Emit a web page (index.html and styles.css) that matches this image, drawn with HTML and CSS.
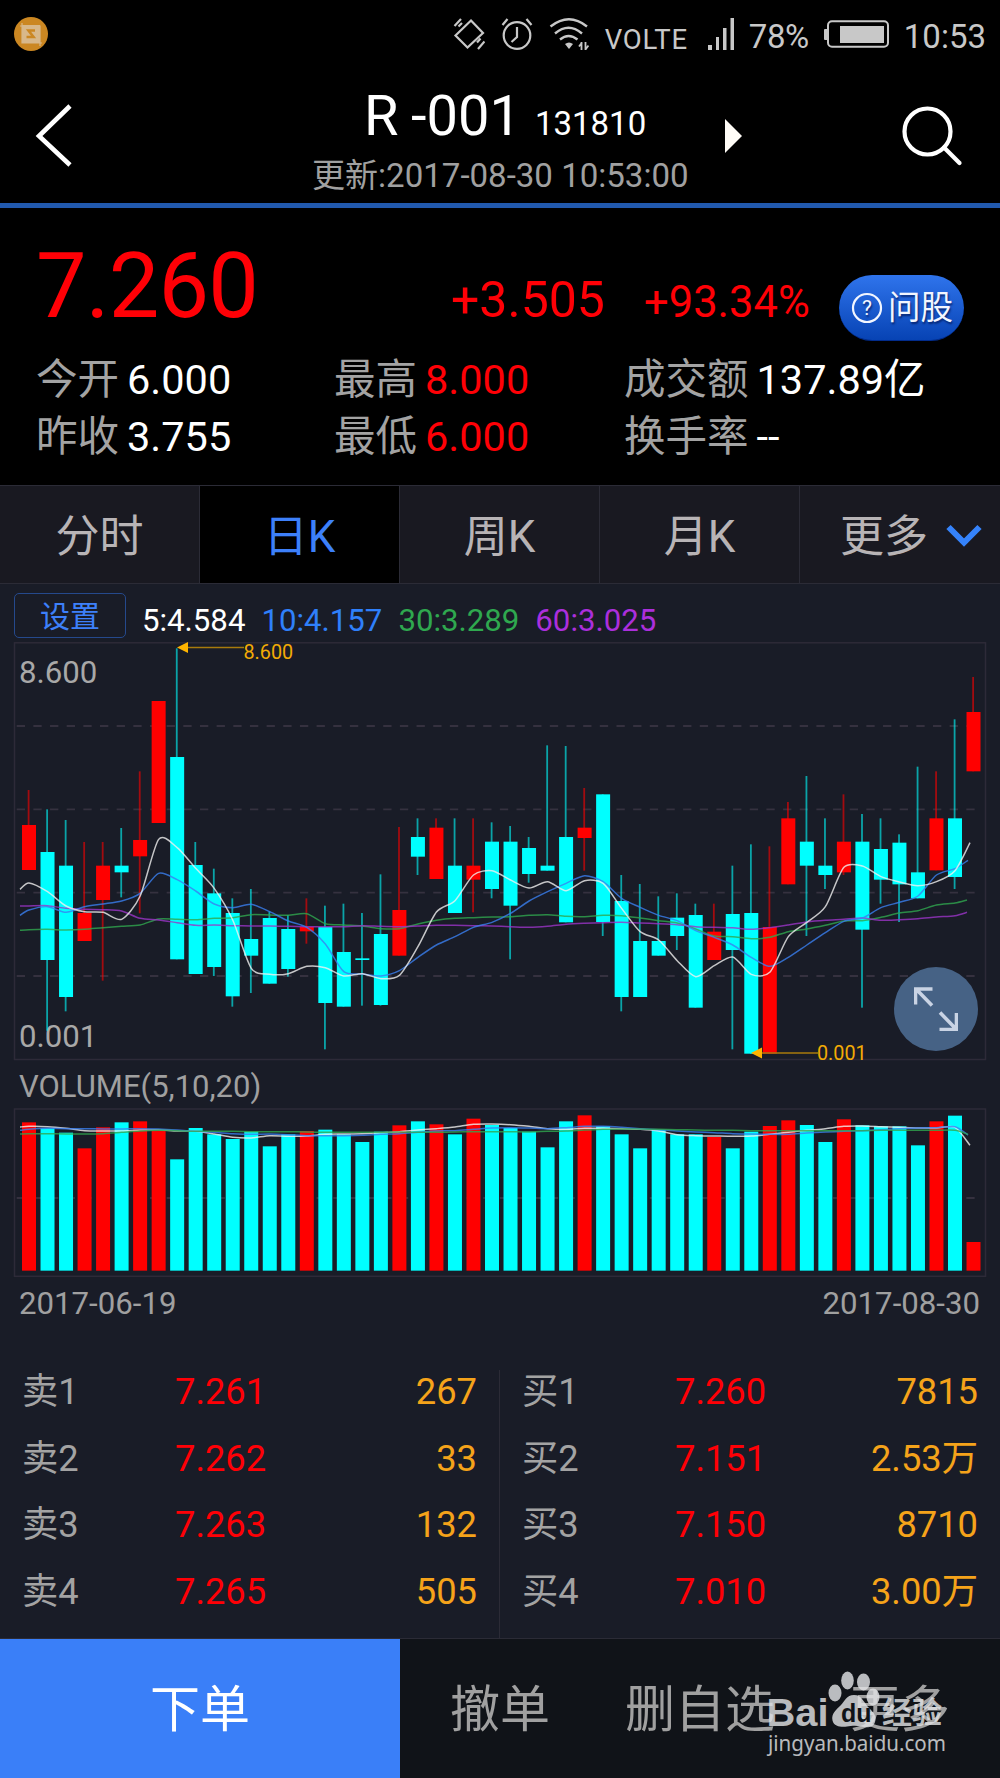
FILE: index.html
```html
<!DOCTYPE html>
<html lang="zh-CN">
<head>
    <meta charset="UTF-8">
    <meta name="viewport" content="width=device-width, initial-scale=1.0">
    <title>R-001 131810</title>
    <link rel="stylesheet" href="styles.css">
</head>
<body>
    <div class="status-bar">
        <svg class="app-icon" width="34" height="34" viewBox="0 0 34 34">
            <circle cx="17" cy="17" r="17" fill="#cb8722"/>
            <rect x="8" y="8" width="18" height="18" fill="#d8b88a"/>
            <path d="M8 6v20h20M6 9h20v20" fill="none" stroke="#d8b88a" stroke-width="1.2"/>
            <path d="M21 13.500h-6.500l5 6.500h-7" fill="none" stroke="#cb8722" stroke-width="2.6"/>
        </svg>
        <div class="status-icons">
            <svg width="32" height="32" viewBox="0 0 32 32" fill="none" stroke="#c8c8c8" stroke-width="2.2">
                <path d="M18 2.500L30 15 14.500 29.500 2.500 17.500z"/>
                <path d="M1.500 8L8 1M5.500 8.500l3.500-3.500M24 24.500l3.500-4M25 31l6.500-7.500"/>
            </svg>
            <svg width="32" height="32" viewBox="0 0 32 32" fill="none" stroke="#c8c8c8" stroke-width="2.2">
                <circle cx="16" cy="17.500" r="13.300"/>
                <path d="M16 9v10l-5.500 5M1.500 7l5-6M30.500 7l-5-6"/>
            </svg>
            <svg width="40" height="32" viewBox="0 0 40 32" fill="none" stroke="#c8c8c8" stroke-width="2.4">
                <path d="M1.500 8.500Q20-6 38 8.500M6 15.500Q19.500 4 33 15.500M11 21.500q8.500-7 17.500 0"/>
                <path d="M16 26q4-3 8 0l-4 5z" fill="#c8c8c8" stroke="none"/>
                <path d="M32.500 24v8M36.500 24v8M30 28.500l3-4M39.500 27.500l-3 4" stroke-width="1.8"/>
            </svg>
            <span class="volte">VOLTE</span>
            <svg width="27" height="32" viewBox="0 0 27 32" fill="#c8c8c8">
                <path d="M0 27h4v5H0zM8 19h3v13H8zM15 10h3.500v22H15zM22.500 0H26v32h-3.500z"/>
            </svg>
            <span class="percent">78%</span>
            <svg width="65" height="28" viewBox="0 0 65 28" fill="#c8c8c8">
                <rect x="4" y="1.200" width="60" height="25.600" rx="4" fill="none" stroke="#c8c8c8" stroke-width="2"/>
                <rect x="0" y="9" width="4" height="11" rx="1"/>
                <rect x="16" y="6" width="44" height="17"/>
            </svg>
            <span class="clock">10:53</span>
        </div>
    </div>

    <div class="header">
        <svg class="back" width="40" height="64" viewBox="0 0 40 64">
            <path d="M35 3L4 33l31 29" fill="none" stroke="#fff" stroke-width="4.600"/>
        </svg>
        <div class="title-block">
            <div class="title"><span class="name">R<i class="name-gap"></i>-001</span><span class="code">131810</span></div>
            <div class="updated">更新:2017-08-30 10:53:00</div>
        </div>
        <svg class="next" width="17" height="34" viewBox="0 0 17 34"><path d="M0 0l17 17L0 34z" fill="#fffcf7"/></svg>
        <svg class="search" width="62" height="62" viewBox="0 0 62 62" fill="none" stroke="#fff" stroke-width="4.200" stroke-linecap="round">
            <circle cx="26.500" cy="26.500" r="23"/>
            <path d="M43 42.500l15.500 15.500"/>
        </svg>
    </div>

    <div class="quote">
        <div class="price-row">
            <span class="price">7.260</span>
            <span class="change">+3.505</span>
            <span class="change-pct">+93.34%</span>
            <div class="ask-btn">
                <svg width="32" height="32" viewBox="0 0 32 32">
                    <circle cx="16" cy="16" r="14" fill="none" stroke="#f2f6ff" stroke-width="2.2"/>
                    <text x="16" y="23" class="ask-mark">?</text>
                </svg>
                <span>问股</span>
            </div>
        </div>
        <div class="stats">
            <div class="stat"><span class="label">今开</span><span>6.000</span></div>
            <div class="stat"><span class="label">最高</span><span class="up">8.000</span></div>
            <div class="stat"><span class="label">成交额</span><span>137.89亿</span></div>
            <div class="stat"><span class="label">昨收</span><span>3.755</span></div>
            <div class="stat"><span class="label">最低</span><span class="up">6.000</span></div>
            <div class="stat"><span class="label">换手率</span><span>--</span></div>
        </div>
    </div>

    <div class="tabs">
        <div class="tab">分时</div>
        <div class="tab active">日K</div>
        <div class="tab">周K</div>
        <div class="tab">月K</div>
        <div class="tab">更多
            <svg width="36" height="24" viewBox="0 0 36 24"><path d="M2.500 3L18 18.500 33.500 3" fill="none" stroke="#3583fb" stroke-width="6"/></svg>
        </div>
    </div>

    <div class="chart">
        <div class="legend">
            <span class="settings-btn">设置</span>
            <span class="ma5">5:4.584</span>
            <span class="ma10">10:4.157</span>
            <span class="ma30">30:3.289</span>
            <span class="ma60">60:3.025</span>
        </div>
        <div class="plot-wrap">
            <svg class="plot" id="kline" width="1000" height="424" viewBox="0 0 1000 424"></svg>
            <div class="fullscreen-btn">
                <svg width="44" height="44" viewBox="0 0 44 44" fill="none" stroke="#c9d3e4" stroke-width="3.600">
                    <path d="M18 18.500L2 2M1.500 17.500V2h17M26 25.500L42 42M42.500 26v16.500h-17"/>
                </svg>
            </div>
        </div>
        <div class="volume-title">VOLUME(5,10,20)</div>
        <svg class="plot" id="volume" width="1000" height="170" viewBox="0 0 1000 170"></svg>
        <div class="dates"><span>2017-06-19</span><span>2017-08-30</span></div>
    </div>

    <div class="book">
        <div class="side">
            <div class="order"><span>卖1</span><span class="up">7.261</span><span class="qty">267</span></div>
            <div class="order"><span>卖2</span><span class="up">7.262</span><span class="qty">33</span></div>
            <div class="order"><span>卖3</span><span class="up">7.263</span><span class="qty">132</span></div>
            <div class="order"><span>卖4</span><span class="up">7.265</span><span class="qty">505</span></div>
        </div>
        <div class="side">
            <div class="order"><span>买1</span><span class="up">7.260</span><span class="qty">7815</span></div>
            <div class="order"><span>买2</span><span class="up">7.151</span><span class="qty">2.53万</span></div>
            <div class="order"><span>买3</span><span class="up">7.150</span><span class="qty">8710</span></div>
            <div class="order"><span>买4</span><span class="up">7.010</span><span class="qty">3.00万</span></div>
        </div>
    </div>

    <div class="bottom-bar">
        <div class="action primary">下单</div>
        <div class="action">撤单</div>
        <div class="action">删自选</div>
        <div class="action">更多</div>
        <svg class="watermark" width="190" height="90" viewBox="0 0 190 90">
            <text x="6.500" y="57.500" class="wm-bai" textLength="62" lengthAdjust="spacingAndGlyphs">Bai</text>
            <ellipse cx="75" cy="25" rx="6.500" ry="8.500"/>
            <ellipse cx="87.500" cy="12.500" rx="6.300" ry="9"/>
            <ellipse cx="103.500" cy="14" rx="6.500" ry="8.500"/>
            <ellipse cx="113" cy="29" rx="6.500" ry="8.500"/>
            <path d="M94 27c8 0 10 8 15 13s8 8 6 14-8 6-14 4.500-10-.5-14 0-13 1-14.500-6 4-11 8-15 6-10.500 13.500-10.500z"/>
            <text x="81" y="54" class="wm-du">du</text>
            <text x="122" y="55" class="wm-cn">经验</text>
            <text x="8" y="83" class="wm-url" textLength="178" lengthAdjust="spacingAndGlyphs">jingyan.baidu.com</text>
        </svg>
    </div>
    <script src="chart.js"></script>
</body>
</html>
```
FILE: styles.css
```css
* {
    margin: 0;
    padding: 0;
    box-sizing: border-box;
}

body {
    width: 1000px;
    height: 1778px;
    overflow: hidden;
    background: #191c27;
    color: #fff;
    font-family: Roboto, "Noto Sans CJK SC", sans-serif;
}

svg {
    display: block;
    flex-shrink: 0;
}

.up {
    color: #ff0006;
}

/* status bar */
.status-bar {
    height: 74px;
    background: #000;
    display: flex;
    justify-content: space-between;
    padding: 0 14px 0 14px;
}

.app-icon {
    margin-top: 17px;
}

.status-icons {
    display: flex;
    align-items: center;
    color: #c8c8c8;
    font-size: 33px;
    line-height: 74px;
}

.status-icons svg {
    margin-bottom: 6px;
}

.status-icons svg + svg {
    margin-left: 16px;
}

.volte {
    font-size: 27.500px;
    margin: 6px 20px 0 16px;
    letter-spacing: 0.7px;
}

.percent {
    margin: 0 15px 0 14px;
    letter-spacing: -0.4px;
}

.clock {
    margin-left: 15px;
}

/* header */
.header {
    height: 134px;
    background: #000;
    border-bottom: 5px solid #2159ae;
    display: flex;
    padding-left: 35px;
}

.back {
    margin-top: 29px;
}

.title-block {
    width: 376px;
    margin-left: 237px;
    padding-top: 7px;
    white-space: nowrap;
}

.title {
    height: 70px;
    line-height: 70px;
    padding-left: 52px;
}

.name {
    font-size: 56px;
}

.name-gap {
    display: inline-block;
    width: 12.500px;
}

.code {
    font-size: 33px;
    margin-left: 14px;
}

.updated {
    color: #a0a0a0;
    font-size: 33.050px;
    line-height: 50px;
}

.next {
    margin: 45px 0 0 37px;
}

.search {
    margin: 31px 0 0 159px;
}

/* quote */
.quote {
    height: 277px;
    background: #000;
    padding: 29px 0 0 36px;
}

.price-row {
    height: 100px;
    display: grid;
    grid-template-columns: 415px 193px 195px 125px;
    align-items: baseline;
    line-height: 100px;
    color: #ff0006;
}

.price {
    font-size: 90px;
    letter-spacing: -0.8px;
}

.change {
    font-size: 50px;
}

.change-pct {
    font-size: 43.500px;
}

.ask-btn {
    align-self: start;
    margin-top: 38px;
    height: 66px;
    border-radius: 33px;
    background: linear-gradient(#2f74ec, #0743b4);
    border-bottom: 1px solid #022c8c;
    color: #f2f6ff;
    font-size: 32.500px;
    line-height: 66px;
    display: flex;
    align-items: center;
    gap: 5px;
    padding-left: 12px;
    text-shadow: 1px 2px 2px rgba(0, 20, 80, 0.7);
}

.ask-btn span {
    padding-top: 1px;
}

.ask-mark {
    font-size: 21px;
    fill: #f2f6ff;
    text-anchor: middle;
}

.stats {
    display: grid;
    grid-template-columns: 298px 290px 1fr;
    margin-top: 14px;
    font-size: 41.500px;
    line-height: 57px;
}

.stat {
    display: flex;
    gap: 8px;
}

.label {
    color: #a3a3a3;
}

/* period tabs */
.tabs {
    height: 99px;
    display: grid;
    grid-template-columns: repeat(5, 1fr);
    border-top: 1px solid #2b2b36;
    border-bottom: 1px solid #2b2b36;
    background: #191921;
}

.tab {
    display: flex;
    align-items: center;
    justify-content: center;
    gap: 18px;
    border-right: 1px solid #2b2b36;
    color: #b8b4b6;
    font-size: 44px;
    line-height: 92px;
    padding-top: 5px;
}

.tab:last-child {
    border-right: none;
    padding-left: 22px;
}

.tab svg {
    margin-bottom: 3px;
}

.tab.active {
    background: #000;
    color: #3d80fa;
}

/* chart */
.legend {
    height: 58px;
    display: flex;
    padding: 9px 0 0 14px;
    font-size: 31.200px;
    line-height: 55px;
    gap: 16px;
}

.settings-btn {
    width: 112px;
    height: 45px;
    border: 1px solid #25498c;
    border-radius: 5px;
    color: #3d80fa;
    font-size: 30px;
    line-height: 46px;
    text-align: center;
}

.ma10 { color: #2f80fb; }
.ma30 { color: #2fa84f; }
.ma60 { color: #ab2fdc; }

.plot-wrap {
    position: relative;
    height: 418px;
}

.fullscreen-btn {
    position: absolute;
    left: 894px;
    top: 325px;
    width: 84px;
    height: 84px;
    border-radius: 50%;
    background: #466285;
    display: flex;
    align-items: center;
    justify-content: center;
}

.volume-title {
    height: 48px;
    padding: 3px 0 0 19px;
    color: #a0a0a0;
    font-size: 31px;
    line-height: 48px;
}

.dates {
    display: flex;
    justify-content: space-between;
    padding: 0 20px 0 19px;
    color: #a0a0a0;
    font-size: 31.200px;
    line-height: 52px;
}

.frame { fill: none; stroke: #2d2a38; stroke-width: 1.500; }
.grid { stroke: #35313f; stroke-width: 1.800; stroke-dasharray: 8.330 8.330; }
.rise { fill: #ff0000; }
.fall { fill: #00ffff; }
.wick { opacity: 0.6; }
.line { fill: none; stroke-width: 1.500; opacity: 0.8; }
.axis-text { fill: #a8a8a8; font-size: 31.200px; }
.mark { fill: #ffb400; }
.mark-line { stroke: #a87a0c; stroke-width: 1.500; }
.mark-text { fill: #f2ab05; font-size: 19.800px; }

/* order book */
.book {
    display: grid;
    grid-template-columns: 1fr 1fr;
    height: 268px;
    margin-top: 40px;
}

.side {
    display: flex;
    flex-direction: column;
    gap: 23.660px;
    padding: 0 22px 0 22px;
}

.side:first-child {
    border-right: 1px solid #2b2b36;
}

.order {
    display: grid;
    grid-template-columns: 153px 1fr auto;
    color: #a3a3a3;
    font-size: 36.300px;
    line-height: 43px;
}

.qty {
    color: #f5a31a;
}

/* bottom bar */
.bottom-bar {
    position: relative;
    height: 140px;
    display: grid;
    grid-template-columns: 2fr 1fr 1fr 1fr;
    border-top: 1px solid #2b2b36;
    background: #101318;
}

.action {
    padding-top: 3px;
    text-align: center;
    color: #a0a0a0;
    font-size: 50px;
    line-height: 136px;
}

.action.primary {
    background: #3a7ff8;
    color: #fff;
}

.watermark {
    position: absolute;
    left: 760px;
    top: 29px;
    fill: rgba(225, 226, 228, 0.82);
}

.wm-bai {
    font: bold 39px "Liberation Sans", sans-serif;
}

.wm-du {
    font: bold 25px "Liberation Sans", sans-serif;
    fill: #101318;
}

.wm-cn {
    font: bold 30px "Noto Sans CJK SC", sans-serif;
}

.wm-url {
    font: 22px "Noto Sans", sans-serif;
}
```
FILE: chart.js
```js
// y values are in thirds of a pixel, measured from the top of each panel
const STEP = 18.52;
const BAR_X = 22;
const BAR_W = 14;

// [direction, body top, body bottom, wick top, wick bottom]
const candles = [
    ['r', 735, 870, 630, 870], ['f', 816, 1140, 688, 1352], ['f', 857, 1251, 720, 1294], ['r', 999, 1083, 786, 1083],
    ['r', 857, 960, 786, 1202], ['f', 857, 877, 744, 952], ['r', 780, 829, 574, 1000], ['r', 363, 729, 363, 729],
    ['f', 531, 1138, 205, 1138], ['f', 855, 1182, 786, 1182], ['f', 940, 1161, 866, 1188], ['f', 999, 1249, 955, 1280],
    ['f', 1077, 1127, 927, 1239], ['f', 1014, 1211, 995, 1211], ['f', 1047, 1167, 1005, 1190], ['r', 1041, 1054, 955, 1091],
    ['f', 1041, 1269, 977, 1408], ['f', 1116, 1280, 971, 1280], ['f', 1135, 1140, 999, 1277], ['f', 1062, 1275, 883, 1277],
    ['r', 990, 1127, 741, 1127], ['f', 771, 830, 715, 885], ['r', 743, 897, 715, 897], ['f', 857, 999, 715, 999],
    ['r', 857, 899, 715, 997], ['f', 785, 927, 727, 955], ['f', 785, 977, 738, 1138], ['f', 804, 882, 771, 908],
    ['f', 857, 872, 496, 872], ['f', 771, 1027, 498, 1027], ['r', 743, 774, 624, 872], ['f', 643, 1026, 643, 1068],
    ['f', 963, 1251, 885, 1294], ['f', 1083, 1251, 912, 1251], ['f', 1083, 1127, 949, 1127], ['f', 1013, 1068, 940, 1110],
    ['f', 1005, 1283, 971, 1283], ['r', 1055, 1140, 971, 1140], ['f', 1002, 1110, 857, 1408], ['f', 999, 1421, 793, 1421],
    ['r', 1041, 1421, 799, 1421], ['r', 715, 913, 666, 913], ['f', 785, 857, 588, 1068], ['f', 857, 885, 715, 927],
    ['r', 785, 877, 643, 885], ['f', 785, 1049, 702, 1283], ['f', 807, 899, 715, 971], ['f', 788, 913, 763, 1026],
    ['f', 877, 955, 560, 955], ['r', 715, 871, 574, 871], ['f', 715, 891, 418, 927], ['r', 396, 574, 291, 574]
];

const volumes = [
    187, 205, 218, 265, 202, 187, 184, 212, 298, 204, 223, 237, 215, 259, 223, 213, 209, 223,
    246, 215, 196, 184, 193, 223, 176, 195, 204, 215, 262, 184, 166, 199, 223, 265, 210, 223,
    223, 231, 265, 215, 198, 181, 195, 246, 178, 196, 199, 199, 256, 184, 167, 546
];

const priceLines = [
    { color: '#2fa84f', end: 967, ys: [1051, 1049, 1048, 1050, 1048, 1043, 1039, 1035, 1017, 1018, 1019, 1015, 1013, 1004, 1005, 1006, 1001, 1031, 1035, 1038, 1046, 1046, 1032, 1021, 1015, 1013, 1011, 1010, 1006, 1004, 1009, 1010, 1006, 1007, 1014, 1022, 1029, 1047, 1068, 1070, 1076, 1072, 1055, 1047, 1036, 1023, 1022, 1012, 999, 992, 975, 969, 960] },
    { color: '#9b35c8', end: 967, ys: [978, 978, 977, 985, 988, 989, 993, 1015, 1020, 1028, 1036, 1035, 1037, 1038, 1038, 1039, 1040, 1040, 1040, 1037, 1039, 1040, 1038, 1036, 1036, 1037, 1038, 1040, 1042, 1039, 1033, 1030, 1028, 1027, 1029, 1031, 1034, 1040, 1042, 1043, 1048, 1043, 1035, 1026, 1021, 1018, 1014, 1021, 1019, 1016, 1011, 1007, 997] },
    { color: '#3a7ff0', end: 968, ys: [1006, 990, 980, 997, 980, 972, 963, 940, 880, 899, 933, 972, 983, 973, 995, 1023, 1042, 1092, 1175, 1182, 1188, 1172, 1132, 1095, 1070, 1042, 1027, 1000, 963, 935, 910, 887, 905, 955, 982, 1006, 1022, 1052, 1072, 1095, 1132, 1159, 1132, 1095, 1058, 1024, 1014, 983, 967, 948, 885, 866, 841] },
    { color: '#f0f0f0', end: 970, ys: [928, 909, 935, 978, 995, 997, 1018, 948, 778, 803, 865, 925, 1020, 1165, 1183, 1181, 1159, 1163, 1188, 1181, 1196, 1186, 1100, 996, 962, 885, 872, 900, 924, 905, 932, 902, 910, 985, 1055, 1080, 1142, 1190, 1157, 1131, 1183, 1177, 1070, 1027, 980, 862, 858, 890, 906, 917, 905, 872, 788] }
];

const volumeLines = [
    { color: '#f0f0f0', end: 970, ys: [201, 199, 200, 205, 212, 213, 213, 210, 209, 213, 214, 222, 232, 234, 227, 229, 228, 223, 222, 221, 218, 215, 210, 206, 201, 193, 192, 194, 199, 206, 208, 205, 205, 206, 208, 213, 224, 227, 228, 229, 228, 223, 217, 211, 206, 199, 198, 200, 202, 204, 204, 202, 256] },
    { color: '#3a7ff0', end: 968, ys: [211, 208, 205, 206, 206, 207, 207, 206, 207, 210, 214, 217, 221, 223, 222, 224, 227, 227, 227, 226, 223, 221, 217, 213, 212, 208, 204, 203, 204, 206, 203, 199, 199, 202, 206, 209, 213, 216, 218, 221, 222, 223, 223, 219, 216, 214, 212, 209, 206, 204, 203, 200, 225] },
    { color: '#2fa84f', end: 968, ys: [222, 221, 221, 222, 222, 221, 217, 213, 211, 212, 214, 214, 214, 215, 215, 215, 216, 217, 217, 217, 217, 216, 217, 217, 216, 215, 215, 215, 216, 214, 213, 210, 208, 207, 207, 208, 209, 210, 211, 211, 212, 212, 212, 212, 212, 212, 212, 211, 211, 211, 211, 211, 223] }
];

const kind = d => d === 'r' ? 'rise' : 'fall';
const priceY = v => v / 3 - 62;
const volumeY = v => v / 3 - 48;

function gridLine(y) {
    return `<line class="grid" x1="16.700" x2="976" y1="${y}" y2="${y}"/>`;
}

function smoothLine(line, toY) {
    const last = line.ys.length - 1;
    const pts = line.ys.map((v, i) => {
        const x = i === 0 ? 20 : i === last ? line.end : BAR_X + BAR_W / 2 + (i - 1) * STEP;
        return [x, toY(v)];
    });
    const t = 0.13;
    let d = `M${pts[0]}`;
    for (let i = 0; i < last; i++) {
        const before = pts[i - 1] || pts[i];
        const a = pts[i];
        const b = pts[i + 1];
        const after = pts[i + 2] || b;
        d += `C${a[0] + (b[0] - before[0]) * t} ${a[1] + (b[1] - before[1]) * t} `
            + `${b[0] - (after[0] - a[0]) * t} ${b[1] - (after[1] - a[1]) * t} ${b[0]} ${b[1]}`;
    }
    return `<path class="line" stroke="${line.color}" d="${d}"/>`;
}

function drawKline() {
    let out = '<rect class="frame" x="14.500" y="0.800" width="971" height="416.700"/>';
    out += [438, 688, 938, 1188].map(v => gridLine(priceY(v))).join('');
    out += '<text class="axis-text" x="19" y="40.500">8.600</text><text class="axis-text" x="19" y="404.500">0.001</text>';
    candles.forEach(([dir, top, bottom, high, low], i) => {
        const x = BAR_X + i * STEP;
        out += `<rect class="${kind(dir)} wick" x="${x + 5.700}" y="${priceY(high)}" width="1.800" height="${(low - high) / 3}"/>`;
        out += `<rect class="${kind(dir)}" x="${x}" y="${priceY(top)}" width="${BAR_W}" height="${(bottom - top) / 3}"/>`;
    });
    out += priceLines.map(l => smoothLine(l, priceY)).join('');
    out += '<line class="mark-line" x1="186" x2="244" y1="5.500" y2="5.500"/><path class="mark" d="M177 5.500l11-5.500v11z"/>';
    out += '<text class="mark-text" x="243.500" y="16.700">8.600</text>';
    out += '<line class="mark-line" x1="760" x2="818" y1="411" y2="411"/><path class="mark" d="M751 411l11-5.500v11z"/>';
    out += '<text class="mark-text" x="817" y="418">0.001</text>';
    document.getElementById('kline').innerHTML = out;
}

function drawVolume() {
    let out = '<rect class="frame" x="14.500" y="1" width="971" height="167.300"/>';
    out += gridLine(volumeY(414));
    volumes.forEach((top, i) => {
        out += `<rect class="${kind(candles[i][0])}" x="${BAR_X + i * STEP}" y="${volumeY(top)}" width="${BAR_W}" height="${(632 - top) / 3}"/>`;
    });
    out += volumeLines.map(l => smoothLine(l, volumeY)).join('');
    document.getElementById('volume').innerHTML = out;
}

drawKline();
drawVolume();
```
